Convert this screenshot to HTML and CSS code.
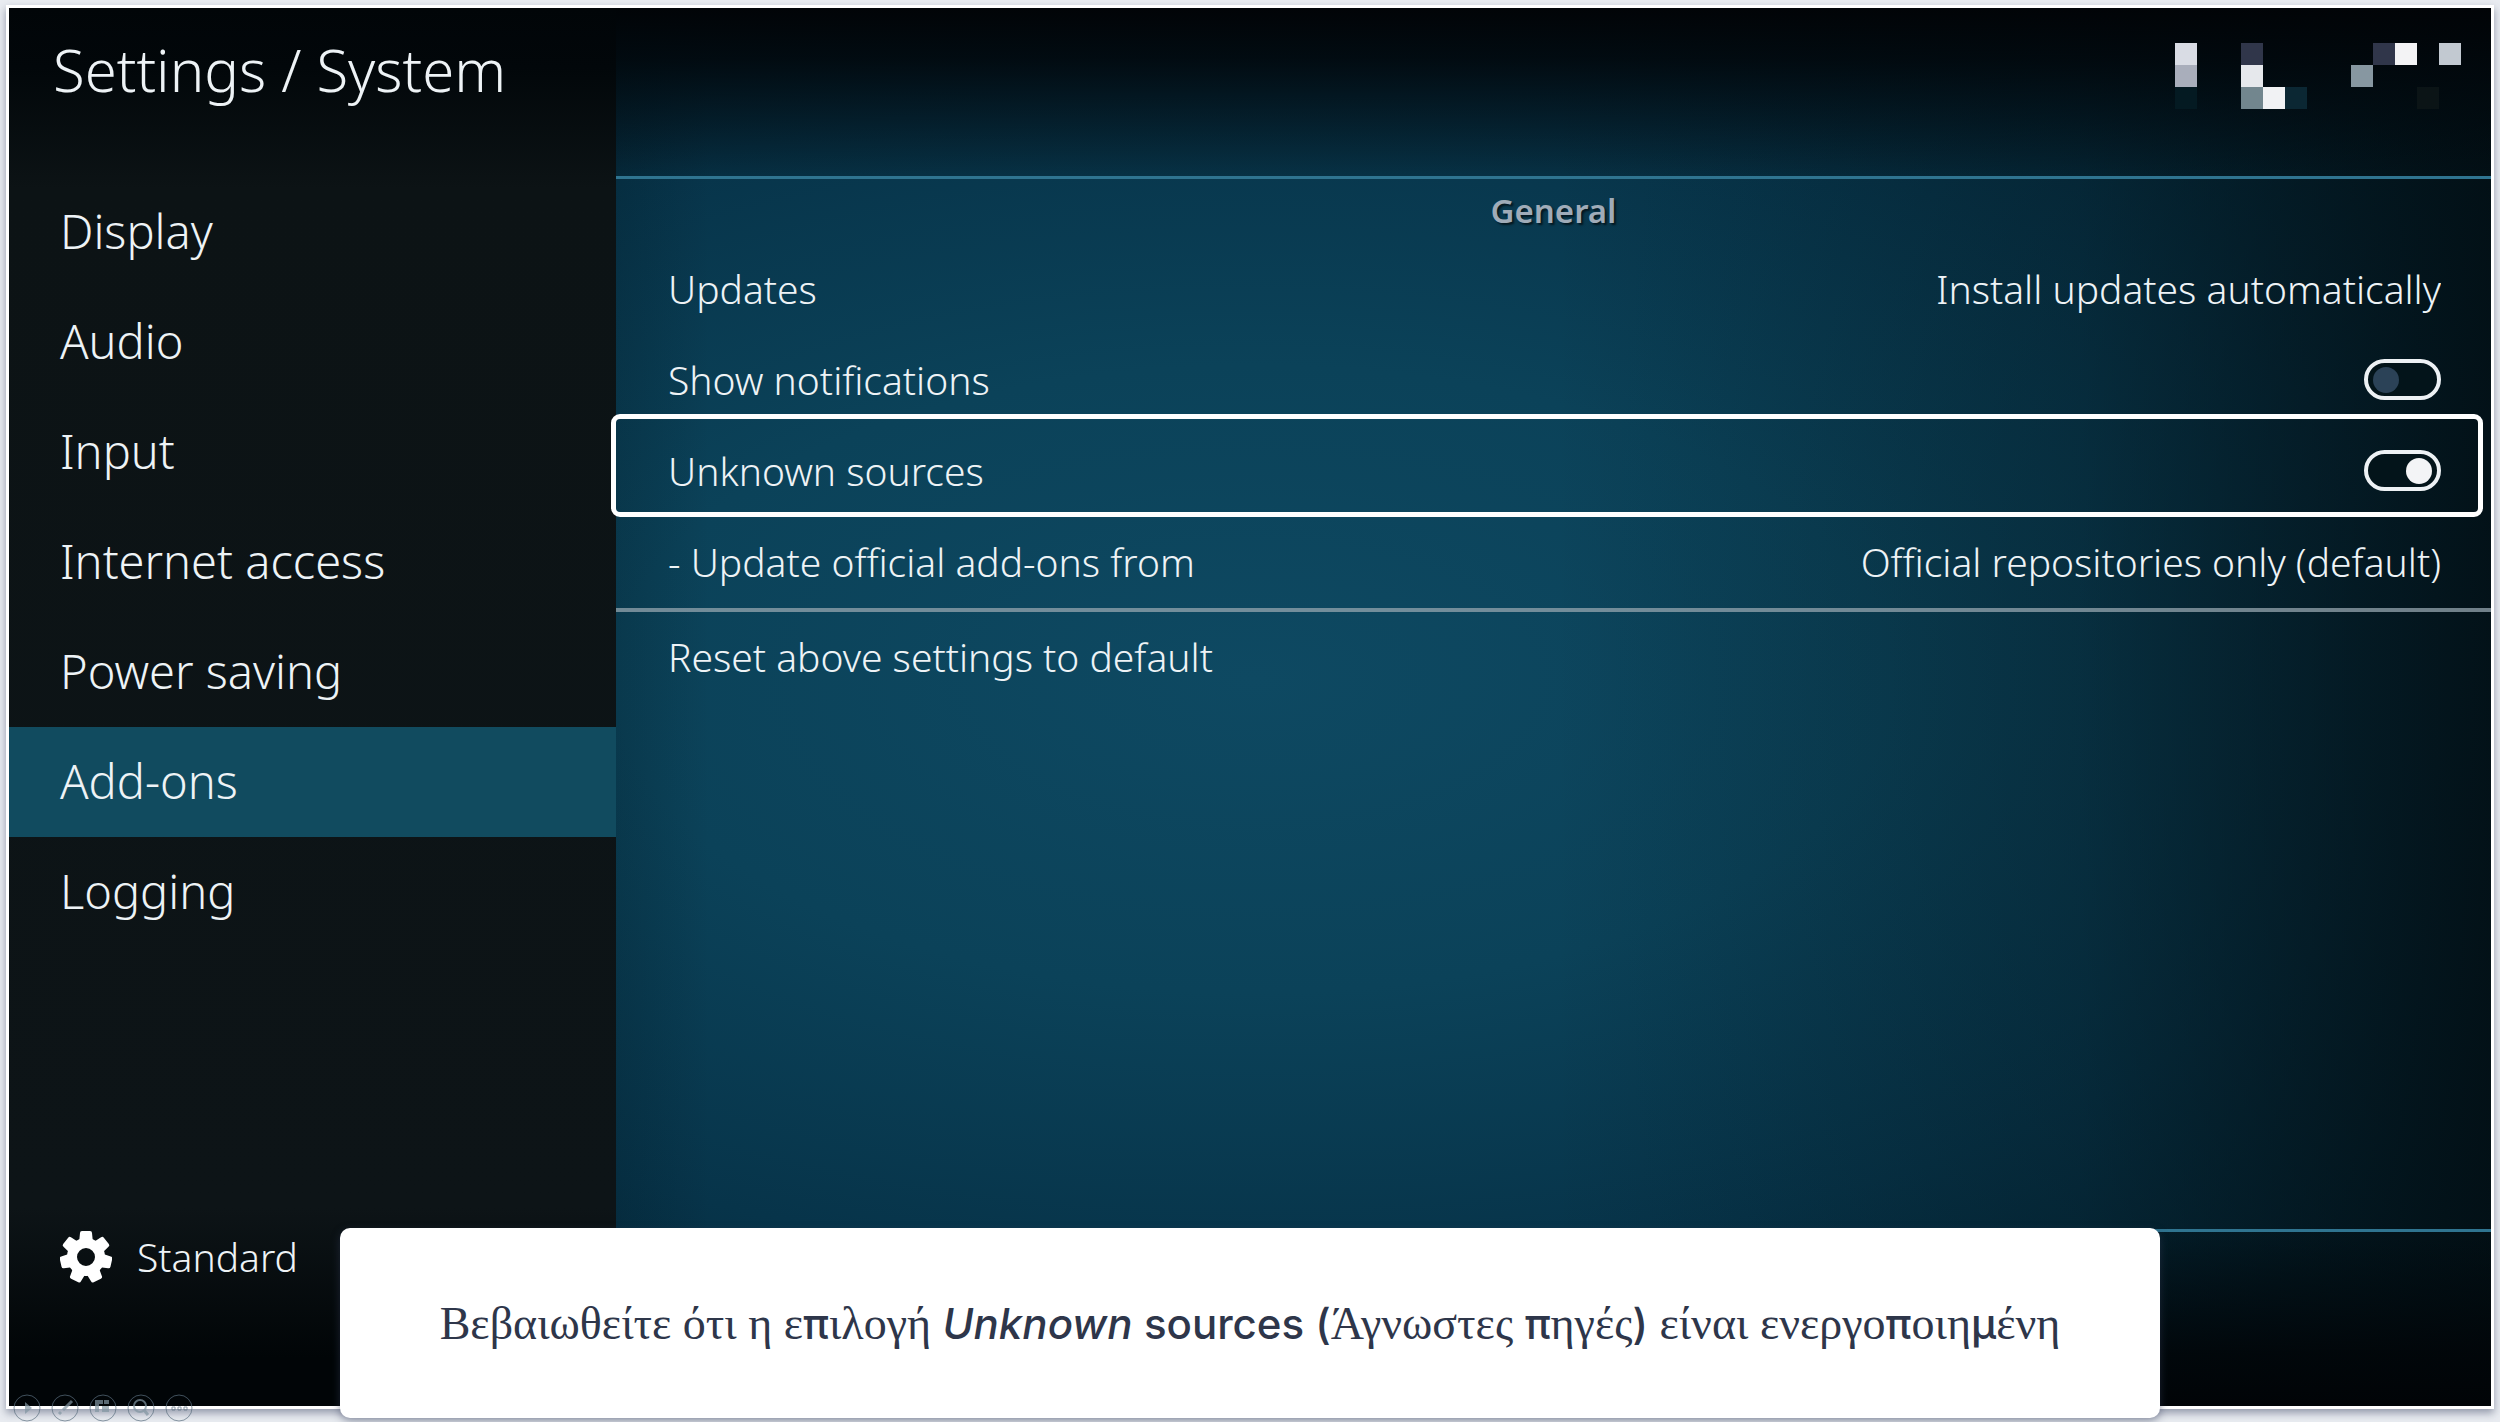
FILE: index.html
```
<!DOCTYPE html>
<html lang="el">
<head>
  <meta charset="UTF-8" />
  <meta name="viewport" content="width=device-width, initial-scale=1.0"/>
  <title>Settings / System</title>
  <link rel="stylesheet" href="styles.css">
</head>
<body>

  <div class="screen" lang="en">
    <aside class="sidebar">
      <h1>Settings / System</h1>
      <nav class="menu">
        <a href="#display">Display</a>
        <a href="#audio">Audio</a>
        <a href="#input">Input</a>
        <a href="#internet">Internet access</a>
        <a href="#power">Power saving</a>
        <a href="#addons" class="active">Add-ons</a>
        <a href="#logging">Logging</a>
      </nav>
      <button type="button" class="level">
        <svg class="gear" viewBox="-26 -26 52 52" aria-hidden="true">
          <defs>
            <path id="tooth" d="M-7 -14 L-6 -24 Q-6 -26 -4 -26 H4 Q6 -26 6 -24 L7 -14 Z"/>
          </defs>
          <circle r="14" fill="none" stroke="#fff" stroke-width="10"/>
          <g fill="#fff">
            <use href="#tooth"/>
            <use href="#tooth" transform="rotate(51.43)"/>
            <use href="#tooth" transform="rotate(102.86)"/>
            <use href="#tooth" transform="rotate(154.29)"/>
            <use href="#tooth" transform="rotate(205.71)"/>
            <use href="#tooth" transform="rotate(257.14)"/>
            <use href="#tooth" transform="rotate(308.57)"/>
          </g>
        </svg>
        Standard
      </button>
    </aside>

    <main class="content">
      <header class="topbar">
        <svg class="clock" viewBox="0 0 13 3" shape-rendering="crispEdges" aria-hidden="true">
          <rect x="0" y="0" width="1" height="1" fill="#d9dce4"/>
          <rect x="0" y="1" width="1" height="1" fill="#a9aebb"/>
          <rect x="0" y="2" width="1" height="1" fill="#041a22"/>
          <rect x="3" y="0" width="1" height="1" fill="#30364a"/>
          <rect x="3" y="1" width="1" height="1" fill="#e6e8ec"/>
          <rect x="3" y="2" width="1" height="1" fill="#72868e"/>
          <rect x="4" y="2" width="1" height="1" fill="#f1f2f4"/>
          <rect x="5" y="2" width="1" height="1" fill="#0b2733"/>
          <rect x="8" y="1" width="1" height="1" fill="#8797a1"/>
          <rect x="9" y="0" width="1" height="1" fill="#30364a"/>
          <rect x="10" y="0" width="1" height="1" fill="#f3f3f5"/>
          <rect x="11" y="2" width="1" height="1" fill="#0b1416"/>
          <rect x="12" y="0" width="1" height="1" fill="#c2c9d1"/>
        </svg>
      </header>

      <section class="settings">
        <h2>General</h2>
        <div class="row">
          <label for="updates">Updates</label>
          <select id="updates"><option>Install updates automatically</option></select>
        </div>
        <div class="row">
          <label for="notify">Show notifications</label>
          <input type="checkbox" class="toggle" id="notify" />
        </div>
        <div class="row focused">
          <label for="unknown">Unknown sources</label>
          <input type="checkbox" class="toggle" id="unknown" checked />
        </div>
        <div class="row">
          <label for="official">- Update official add-ons from</label>
          <select id="official"><option>Official repositories only (default)</option></select>
        </div>
        <button type="button" class="row reset">Reset above settings to default</button>
      </section>

      <footer class="bottombar"></footer>
    </main>
  </div>

  <div class="tools">
    <button type="button" aria-label="Next"><svg viewBox="0 0 28 28"><circle cx="14" cy="14" r="13"/><path class="fill" d="M12 8 L19 14 L12 20 Z"/></svg></button>
    <button type="button" aria-label="Pen"><svg viewBox="0 0 28 28"><circle cx="14" cy="14" r="13"/><path class="thick" d="M21 7 L12 16 M10 18 L8 20"/></svg></button>
    <button type="button" aria-label="Slides"><svg viewBox="0 0 28 28"><circle cx="14" cy="14" r="13"/><path class="fill" d="M6 6 H14 V10 H10 V18 H6 Z M15 6 H20 V10 H15 Z M13 12 H20 V18 H13 Z"/></svg></button>
    <button type="button" aria-label="Zoom"><svg viewBox="0 0 28 28"><circle cx="14" cy="14" r="13"/><circle class="lens" cx="13" cy="12" r="6"/><path class="thick" d="M17 16 L21 21"/></svg></button>
    <button type="button" aria-label="More"><svg viewBox="0 0 28 28"><circle cx="14" cy="14" r="13"/><path d="M7 13 h3 v3 h-3 z M13 13 h3 v3 h-3 z M19 13 h3 v3 h-3 z"/></svg></button>
  </div>

  <p class="caption">
    <span>Βεβαιωθείτε ότι η ε<b>π</b>ιλογή <em>Unknown</em> <b>sources (</b>Άγνωστες <b>π</b>ηγές<b>)</b> είναι ενεργο<b>π</b>οιη<b>μ</b>ένη</span>
  </p>

</body>
</html>
```
FILE: styles.css
```
* { box-sizing: border-box; }

body {
  display: flex;
  position: relative;
  min-height: 100vh;
  margin: 0;
  padding: 5px 6px 13px;
  background: #e9ecf1;
  font-family: 'Noto Sans', sans-serif;
  font-weight: 300;
  color: #eef3f6;
}

.screen {
  flex: 1;
  display: grid;
  grid-template-columns: clamp(320px, 25%, 607px) 1fr;
  border: 3px solid #fff;
  background: #03161d;
  box-shadow: 0 4px 8px rgba(60, 70, 100, 0.5);
}

/* left menu */
.sidebar {
  display: flex;
  flex-direction: column;
  background: linear-gradient(#010508 0, #02070a 60px, #0c1315 180px, #0d1417 1200px, #010507 1350px);
}

h1 {
  height: 169px;
  margin: 0;
  padding: 22px 44px 0;
  font-size: 58px;
  line-height: 80px;
  font-weight: 300;
  white-space: nowrap;
}

.menu a {
  display: flex;
  align-items: center;
  height: 110px;
  padding: 0 51px 3px;
  font-size: 47px;
  color: inherit;
  text-decoration: none;
}

.menu a.active { background: #114b5f; }

button, select {
  padding: 0;
  border: none;
  background: none;
  font: inherit;
  color: inherit;
  cursor: pointer;
}

.level {
  display: flex;
  align-items: center;
  gap: 25px;
  margin-top: auto;
  margin-bottom: 121px;
  padding: 0 51px;
  font-size: 39px;
  line-height: 56px;
}

.gear { width: 52px; height: 52px; }

/* right side */
.content {
  display: flex;
  flex-direction: column;
  background:
    linear-gradient(90deg, rgba(2, 20, 28, 0.2), transparent 5%),
    linear-gradient(90deg, transparent 50%, rgba(3, 20, 26, 0.35) 78%, rgba(2, 12, 16, 0.85)),
    radial-gradient(ellipse 85% 56% at 34% 48%, #0e4962 0, #0b4259 40%, #07344a 75%, #04283a 100%);
}

.topbar {
  display: flex;
  justify-content: flex-end;
  height: 171px;
  padding: 35px 30px 0;
  border-bottom: 3px solid #2f7490;
  background: linear-gradient(#010407, rgba(1, 6, 10, 0.88) 30%, rgba(1, 10, 14, 0.15));
}

.clock { width: 286px; height: 66px; }

h2 {
  height: 65px;
  margin: 0;
  font-size: 33px;
  line-height: 64px;
  font-weight: 600;
  text-align: center;
  color: #9fabb8;
  text-shadow: 2px 2px 2px rgba(0, 0, 0, 0.6);
}

.row {
  display: flex;
  position: relative;
  align-items: center;
  justify-content: space-between;
  width: 100%;
  height: 91px;
  padding: 0 50px 2px 52px;
  font-size: 39px;
}

.row select {
  appearance: none;
  text-align: right;
  text-align-last: right;
}

.focused::after {
  content: '';
  position: absolute;
  inset: -12px 8px 0 -5px;
  border: 5px solid #fff;
  border-radius: 9px;
  pointer-events: none;
}

.toggle {
  appearance: none;
  display: flex;
  align-items: center;
  width: 77px;
  height: 41px;
  margin: 0;
  padding: 0 5px;
  border: 4px solid #edf1f4;
  border-radius: 21px;
  background: #03141a;
}

.toggle::before {
  content: '';
  width: 26px;
  height: 26px;
  border-radius: 50%;
  background: #2b4257;
}

.toggle:checked { justify-content: flex-end; }
.toggle:checked::before { background: #f3f4f6; }

.reset {
  height: 94px;
  border-top: 4px solid rgba(150, 165, 175, 0.75);
}

.bottombar {
  height: 177px;
  margin-top: auto;
  border-top: 3px solid #2f7490;
  background: linear-gradient(rgba(1, 12, 16, 0.2), rgba(1, 5, 8, 0.9) 70%, #010407);
}

/* slide show buttons */
.tools {
  display: flex;
  gap: 10px;
  position: absolute;
  left: 13px;
  bottom: 0;
}

.tools svg {
  display: block;
  width: 28px;
  height: 28px;
  fill: none;
  stroke: #5c7080;
  opacity: 0.7;
}

.tools .fill { fill: #8296a2; stroke: none; }
.tools .thick { stroke: #8296a2; stroke-width: 3; }
.tools .lens { stroke: #8296a2; stroke-width: 2; }

.caption {
  display: flex;
  position: absolute;
  left: 340px;
  right: 340px;
  bottom: 4px;
  align-items: center;
  justify-content: center;
  min-height: 190px;
  margin: 0;
  border-radius: 10px;
  background: #fff;
  box-shadow: 0 3px 8px rgba(50, 60, 90, 0.5);
  font-family: 'Liberation Serif', serif;
  font-size: 46px;
  font-weight: 400;
  color: #2e364a;
}

.caption b, .caption em {
  font-family: Inter, sans-serif;
  font-size: 42px;
  font-weight: 500;
}
```
